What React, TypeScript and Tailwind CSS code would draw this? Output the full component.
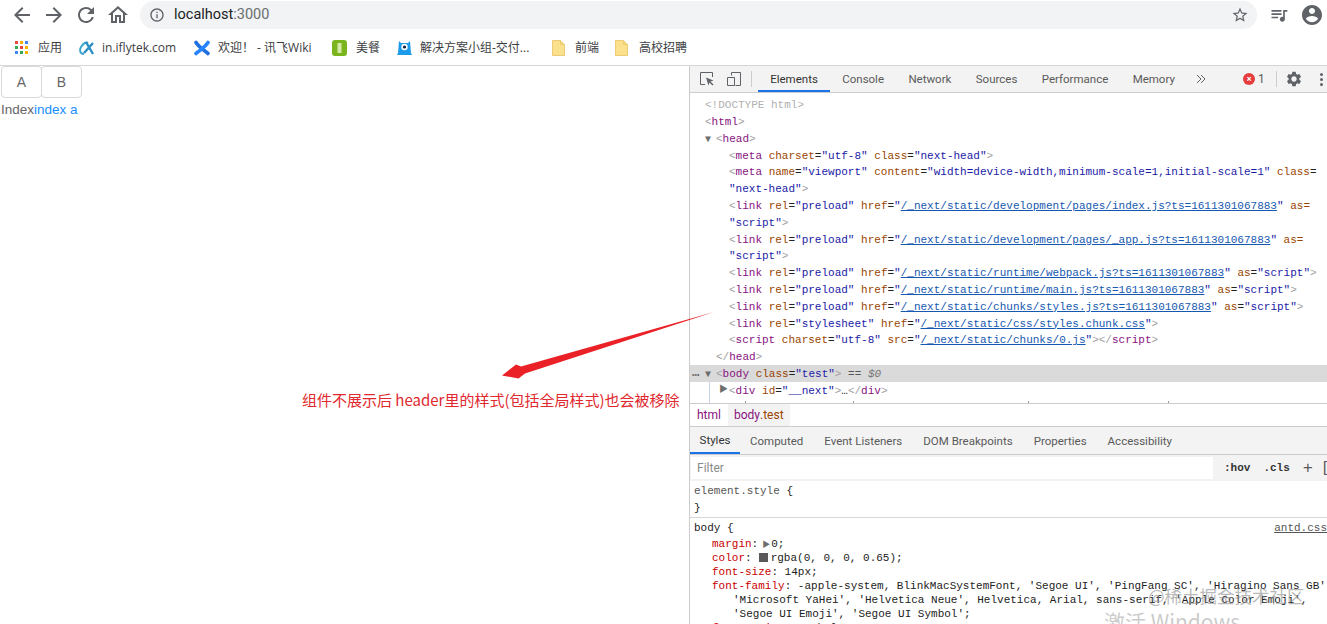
import type { ReactNode } from "react";

const UI_FONT = "font-['Roboto','Noto_Sans_CJK_SC',sans-serif]";
const BOOKMARK_FONT = "font-['Open_Sans','Noto_Sans_CJK_SC',sans-serif]";
const MONO_FONT = "font-['Liberation_Mono','Noto_Sans_CJK_SC',monospace]";

function MaterialIcon({ d, className }: { d: string; className: string }) {
  return (
    <svg viewBox="0 0 24 24" fill="currentColor" className={className}>
      <path d={d} />
    </svg>
  );
}

const ICONS = {
  back: "M20 11H7.83l5.59-5.59L12 4l-8 8 8 8 1.41-1.41L7.83 13H20v-2z",
  forward: "M12 4l-1.41 1.41L16.17 11H4v2h12.17l-5.58 5.59L12 20l8-8z",
  reload:
    "M17.65 6.35A7.958 7.958 0 0012 4c-4.42 0-7.99 3.58-7.99 8s3.57 8 7.99 8c3.73 0 6.84-2.55 7.73-6h-2.08A5.99 5.99 0 0112 18c-3.31 0-6-2.69-6-6s2.69-6 6-6c1.66 0 3.14.69 4.22 1.78L13 11h7V4l-2.35 2.35z",
  home: "M12 5.69l5 4.5V18h-2v-6H9v6H7v-7.81l5-4.5M12 3L2 12h3v8h6v-6h2v6h6v-8h3L12 3z",
  info: "M11 7h2v2h-2zm0 4h2v6h-2zm1-9C6.48 2 2 6.48 2 12s4.48 10 10 10 10-4.48 10-10S17.52 2 12 2zm0 18c-4.41 0-8-3.59-8-8s3.59-8 8-8 8 3.59 8 8-3.59 8-8 8z",
  star: "M22 9.24l-7.19-.62L12 2 9.19 8.63 2 9.24l5.46 4.73L5.82 21 12 17.27 18.18 21l-1.63-7.03L22 9.24zM12 15.4l-3.76 2.27 1-4.28-3.32-2.88 4.38-.38L12 6.1l1.71 4.04 4.38.38-3.32 2.88 1 4.28L12 15.4z",
  queue:
    "M15 6H3v2h12V6zm0 4H3v2h12v-2zM3 16h8v-2H3v2zM17 6v8.18c-.31-.11-.65-.18-1-.18-1.66 0-3 1.34-3 3s1.34 3 3 3 3-1.34 3-3V8h3V6h-5z",
  account:
    "M12 2C6.48 2 2 6.48 2 12s4.48 10 10 10 10-4.48 10-10S17.52 2 12 2zm0 3c1.66 0 3 1.34 3 3s-1.34 3-3 3-3-1.34-3-3 1.34-3 3-3zm0 14.2c-2.5 0-4.71-1.28-6-3.22.03-1.99 4-3.08 6-3.08 1.99 0 5.97 1.09 6 3.08-1.29 1.94-3.5 3.22-6 3.22z",
  gear: "M19.14 12.94c.04-.3.06-.61.06-.94 0-.32-.02-.64-.07-.94l2.03-1.58a.49.49 0 00.12-.61l-1.92-3.32a.488.488 0 00-.59-.22l-2.39.96c-.5-.38-1.03-.7-1.62-.94l-.36-2.54a.484.484 0 00-.48-.41h-3.84c-.24 0-.43.17-.47.41l-.36 2.54c-.59.24-1.13.57-1.62.94l-2.39-.96c-.22-.08-.47 0-.59.22L2.74 8.87c-.12.21-.08.47.12.61l2.03 1.58c-.05.3-.09.63-.09.94s.02.64.07.94l-2.03 1.58a.49.49 0 00-.12.61l1.92 3.32c.12.22.37.29.59.22l2.39-.96c.5.38 1.03.7 1.62.94l.36 2.54c.05.24.24.41.48.41h3.84c.24 0 .44-.17.47-.41l.36-2.54c.59-.24 1.13-.56 1.62-.94l2.39.96c.22.08.47 0 .59-.22l1.92-3.32c.12-.22.07-.47-.12-.61l-2.01-1.58zM12 15.6c-1.98 0-3.6-1.62-3.6-3.6s1.62-3.6 3.6-3.6 3.6 1.62 3.6 3.6-1.62 3.6-3.6 3.6z",
};

function FolderIcon() {
  return (
    <svg viewBox="0 0 13 16" className="h-[16px] w-[13px]">
      <path d="M.5.5h8l4 4v11H.5z" fill="#fbe08e" stroke="#eccb72" />
      <path d="M8.5.5v4h4" fill="#f6d779" stroke="#eccb72" />
    </svg>
  );
}

function Toolbar() {
  return (
    <div className="flex h-[30px] items-center bg-white text-[#5f6368]">
      <div className="flex w-[140px] items-center pl-[10px]">
        <MaterialIcon d={ICONS.back} className="mr-[8px] h-[24px] w-[24px]" />
        <MaterialIcon d={ICONS.forward} className="mr-[8px] h-[24px] w-[24px]" />
        <MaterialIcon d={ICONS.reload} className="mr-[8px] h-[24px] w-[24px]" />
        <MaterialIcon d={ICONS.home} className="h-[24px] w-[24px]" />
      </div>
      <div className="flex h-[28px] w-[1117px] items-center rounded-full bg-[#f1f3f4] pl-[9px] pr-[8px]">
        <MaterialIcon d={ICONS.info} className="h-[16px] w-[16px]" />
        <span className={`ml-[9px] text-[14.500px] text-[#202124] ${UI_FONT}`}>
          localhost<span className="text-[#6a6d70]">:3000</span>
        </span>
        <MaterialIcon d={ICONS.star} className="ml-auto h-[18px] w-[18px]" />
      </div>
      <MaterialIcon d={ICONS.queue} className="ml-[12px] h-[20px] w-[20px]" />
      <MaterialIcon d={ICONS.account} className="ml-[11px] h-[24px] w-[24px]" />
    </div>
  );
}

function AppsIcon() {
  const colors = ["#e8453c", "#f4b400", "#4285f4", "#34a853", "#e8453c", "#f4b400", "#4285f4", "#34a853", "#f4b400"];
  return (
    <div className="grid h-[13px] w-[13px] grid-cols-3 gap-[1.5px]">
      {colors.map((c, i) => (
        <svg key={i} viewBox="0 0 4 4" className="h-[3.3px] w-[3.3px]">
          <rect width="4" height="4" fill={c} />
        </svg>
      ))}
    </div>
  );
}

function Bookmark({ width, gap, icon, label }: { width: string; gap: string; icon: ReactNode; label: string }) {
  return (
    <div className={`flex shrink-0 items-center ${width} ${gap}`}>
      {icon}
      <span className="whitespace-pre text-[12px] text-[#3c4043]">{label}</span>
    </div>
  );
}

function Bookmarks() {
  return (
    <div className={`flex h-[36px] items-center border-b border-[#d6d6d6] bg-white pl-[15px] ${BOOKMARK_FONT}`}>
      <Bookmark width="w-[63px]" gap="gap-[10px]" icon={<AppsIcon />} label="应用" />
      <Bookmark
        width="w-[116px]"
        gap="gap-[7px]"
        label="in.iflytek.com"
        icon={
          <svg viewBox="0 0 17 16" className="h-[16px] w-[17px]">
            <path d="M6 14C2 14 1 10 3 7s5-5 7-4" fill="none" stroke="#3aa6cf" strokeWidth="2" />
            <path d="M8 2l7 12M15 3L6 13" fill="none" stroke="#2a8fc4" strokeWidth="2.4" />
          </svg>
        }
      />
      <Bookmark
        width="w-[138px]"
        gap="gap-[8px]"
        label="欢迎！ - 讯飞Wiki"
        icon={
          <svg viewBox="0 0 16 16" className="h-[16px] w-[16px]">
            <path d="M2 2.500C5 7 9 9.500 14 13.500" fill="none" stroke="#1f6fe0" strokeWidth="3.600" strokeLinecap="round" />
            <path d="M14 2.500C11 7 7 9.500 2 13.500" fill="none" stroke="#2684ff" strokeWidth="3.600" strokeLinecap="round" />
          </svg>
        }
      />
      <Bookmark
        width="w-[65px]"
        gap="gap-[9px]"
        label="美餐"
        icon={
          <svg viewBox="0 0 15 16" className="h-[16px] w-[15px]">
            <rect width="15" height="16" rx="3" fill="#7ab51d" />
            <rect x="5.500" y="3" width="4" height="10" fill="#d5e9a8" />
          </svg>
        }
      />
      <Bookmark
        width="w-[155px]"
        gap="gap-[8px]"
        label="解决方案小组-交付..."
        icon={
          <svg viewBox="0 0 15 16" className="h-[16px] w-[15px]">
            <path d="M2 1l2 2h7l2-2 1 12 1 2H0l1-2z" fill="#1e9be8" />
            <circle cx="7.500" cy="7" r="3.200" fill="#fff" />
            <circle cx="7.500" cy="7" r="1.600" fill="#123" />
          </svg>
        }
      />
      <Bookmark width="w-[63px]" gap="gap-[10px]" icon={<FolderIcon />} label="前端" />
      <Bookmark width="w-[80px]" gap="gap-[11px]" icon={<FolderIcon />} label="高校招聘" />
    </div>
  );
}

function PagePane() {
  return (
    <div className="w-[689px] shrink-0 bg-white font-['Liberation_Sans',sans-serif]">
      <div className="flex pl-[1px]">
        <div className="flex h-[32px] w-[41px] items-center justify-center rounded-[4px] border border-[#d9d9d9] text-[14px] text-[#666]">
          A
        </div>
        <div className="-ml-px flex h-[32px] w-[41px] items-center justify-center rounded-[4px] border border-[#d9d9d9] text-[14px] text-[#666]">
          B
        </div>
      </div>
      <div className="h-[22px] pl-px pt-px text-[13.500px] leading-[22px] text-[#666]">
        Index<span className="text-[#1890ff]">index a</span>
      </div>
    </div>
  );
}

const T = ({ children }: { children: ReactNode }) => <span className="text-[#881280]">{children}</span>;
const B = ({ children }: { children: ReactNode }) => <span className="text-[#a0a0a0]">{children}</span>;
const A = ({ children }: { children: ReactNode }) => <span className="text-[#994500]">{children}</span>;
const V = ({ children }: { children: ReactNode }) => <span className="text-[#1a1aa6]">{children}</span>;
const L = ({ children }: { children: ReactNode }) => <span className="text-[#1558b0] underline">{children}</span>;

function Row({ pad, children, selected }: { pad: string; children: ReactNode; selected?: boolean }) {
  return (
    <div className={`flex h-[16.800px] items-center whitespace-pre pt-[2px] ${pad} ${selected ? "bg-[#dadada]" : ""}`}>
      {children}
    </div>
  );
}

function LinkRow({ href, rest }: { href: string; rest: ReactNode }) {
  return (
    <Row pad="pl-[39px]">
      <span>
        <B>&lt;</B>
        <T>link</T> <A>rel</A>=<V>"preload"</V> <A>href</A>=<V>"</V>
        <L>{href}</L>
        <V>"</V> {rest}
      </span>
    </Row>
  );
}

const AsScript = () => (
  <>
    <A>as</A>=<V>"script"</V>
    <B>&gt;</B>
  </>
);

function ElementsTree() {
  return (
    <div className={`relative h-[310px] overflow-hidden bg-white pt-[3px] text-[11px] text-[#222] ${MONO_FONT}`}>
      <Row pad="pl-[15px]">
        <span className="text-[#b0b0b0]">&lt;!DOCTYPE html&gt;</span>
      </Row>
      <Row pad="pl-[15px]">
        <span>
          <B>&lt;</B>
          <T>html</T>
          <B>&gt;</B>
        </span>
      </Row>
      <Row pad="pl-[15px]">
        <span className="w-[11px] text-[10px] text-[#6e6e6e]">▼</span>
        <span>
          <B>&lt;</B>
          <T>head</T>
          <B>&gt;</B>
        </span>
      </Row>
      <Row pad="pl-[39px]">
        <span>
          <B>&lt;</B>
          <T>meta</T> <A>charset</A>=<V>"utf-8"</V> <A>class</A>=<V>"next-head"</V>
          <B>&gt;</B>
        </span>
      </Row>
      <Row pad="pl-[39px]">
        <span>
          <B>&lt;</B>
          <T>meta</T> <A>name</A>=<V>"viewport"</V> <A>content</A>=<V>"width=device-width,minimum-scale=1,initial-scale=1"</V> <A>class</A>=
        </span>
      </Row>
      <Row pad="pl-[39px]">
        <span>
          <V>"next-head"</V>
          <B>&gt;</B>
        </span>
      </Row>
      <LinkRow href="/_next/static/development/pages/index.js?ts=1611301067883" rest={<A>as=</A>} />
      <Row pad="pl-[39px]">
        <span>
          <V>"script"</V>
          <B>&gt;</B>
        </span>
      </Row>
      <LinkRow href="/_next/static/development/pages/_app.js?ts=1611301067883" rest={<A>as=</A>} />
      <Row pad="pl-[39px]">
        <span>
          <V>"script"</V>
          <B>&gt;</B>
        </span>
      </Row>
      <LinkRow href="/_next/static/runtime/webpack.js?ts=1611301067883" rest={<AsScript />} />
      <LinkRow href="/_next/static/runtime/main.js?ts=1611301067883" rest={<AsScript />} />
      <LinkRow href="/_next/static/chunks/styles.js?ts=1611301067883" rest={<AsScript />} />
      <Row pad="pl-[39px]">
        <span>
          <B>&lt;</B>
          <T>link</T> <A>rel</A>=<V>"stylesheet"</V> <A>href</A>=<V>"</V>
          <L>/_next/static/css/styles.chunk.css</L>
          <V>"</V>
          <B>&gt;</B>
        </span>
      </Row>
      <Row pad="pl-[39px]">
        <span>
          <B>&lt;</B>
          <T>script</T> <A>charset</A>=<V>"utf-8"</V> <A>src</A>=<V>"</V>
          <L>/_next/static/chunks/0.js</L>
          <V>"</V>
          <B>&gt;&lt;/</B>
          <T>script</T>
          <B>&gt;</B>
        </span>
      </Row>
      <Row pad="pl-[26px]">
        <span>
          <B>&lt;/</B>
          <T>head</T>
          <B>&gt;</B>
        </span>
      </Row>
      <Row pad="pl-[2px]" selected>
        <span className="w-[13px] font-['Liberation_Sans',sans-serif] text-[7px] leading-none text-[#666]">•••</span>
        <span className="w-[11px] text-[10px] text-[#6e6e6e]">▼</span>
        <span>
          <B>&lt;</B>
          <T>body</T> <A>class</A>=<V>"test"</V>
          <B>&gt;</B> <span className="text-[#555]">==</span> <span className="italic text-[#777]">$0</span>
        </span>
      </Row>
      <Row pad="pl-[29px]">
        <span className="w-[10px] text-[9px] text-[#6e6e6e]">▶</span>
        <span>
          <B>&lt;</B>
          <T>div</T> <A>id</A>=<V>"__next"</V>
          <B>&gt;</B>…<B>&lt;/</B>
          <T>div</T>
          <B>&gt;</B>
        </span>
      </Row>
      {/* blue guide line of the selected node */}
      <div className="absolute bottom-0 left-[19px] h-[21px] w-px bg-[#c5d4ea]" />
      {/* tops of the next row, clipped by the pane edge */}
      <div className="absolute bottom-0 left-[55px] h-[2px] w-px bg-[#9a9a9a]" />
      <div className="absolute bottom-0 left-[163px] h-[2px] w-px bg-[#9a9a9a]" />
      <div className="absolute bottom-0 left-[338px] h-[2px] w-px bg-[#9a9a9a]" />
      <div className="absolute bottom-0 left-[478px] h-[2px] w-px bg-[#9a9a9a]" />
    </div>
  );
}

function DevTabs() {
  return (
    <div className={`flex h-[27px] items-center border-b border-[#cccccc] bg-[#f3f3f3] text-[11.500px] text-[#5a5a5a] ${UI_FONT}`}>
      <svg viewBox="0 0 16 16" className="ml-[9px] h-[16px] w-[16px] text-[#5f6368]">
        <path d="M6 13.500H1.500v-12h12V6" fill="none" stroke="currentColor" />
        <path d="M7 6.500l7.500 3-3 1 3 3-1 1-3-3-1 3z" fill="currentColor" />
      </svg>
      <svg viewBox="0 0 16 16" className="ml-[11px] h-[16px] w-[16px] text-[#5f6368]">
        <path d="M5.500 4.500v-3h9v13h-5M1.500 6.500h7v8h-7z" fill="none" stroke="currentColor" />
      </svg>
      <div className="ml-[9px] h-[16px] w-px bg-[#ccc]" />
      <div className="ml-[6px] flex h-full items-center">
        <div className="flex h-full items-center border-b-2 border-[#1a73e8] px-[12.200px] pt-[3px] text-[#333]">Elements</div>
        <div className="px-[12.200px] pt-[2px]">Console</div>
        <div className="px-[12.200px] pt-[2px]">Network</div>
        <div className="px-[12.200px] pt-[2px]">Sources</div>
        <div className="px-[12.200px] pt-[2px]">Performance</div>
        <div className="px-[12.200px] pt-[2px]">Memory</div>
      </div>
      <svg viewBox="0 0 10 10" className="ml-[9px] h-[10px] w-[10px] text-[#5f6368]">
        <path d="M1 1l4 4-4 4M5 1l4 4-4 4" fill="none" stroke="currentColor" />
      </svg>
      <div className="ml-[37px] flex h-[12px] w-[12px] shrink-0 items-center justify-center rounded-full bg-[#e53d3d] text-[9px] font-bold leading-none text-white">
        ×
      </div>
      <span className="ml-[3px] text-[12px] text-[#5a5a5a]">1</span>
      <div className="ml-[11px] h-[16px] w-px shrink-0 bg-[#ccc]" />
      <MaterialIcon d={ICONS.gear} className="ml-[8px] h-[18px] w-[18px] shrink-0 text-[#5f6368]" />
      <div className="ml-[17px] flex shrink-0 flex-col gap-[2px]">
        <div className="h-[3px] w-[3px] rounded-full bg-[#5f6368]" />
        <div className="h-[3px] w-[3px] rounded-full bg-[#5f6368]" />
        <div className="h-[3px] w-[3px] rounded-full bg-[#5f6368]" />
      </div>
    </div>
  );
}

function StyleLine({ children, indent = "pl-[22px]" }: { children: ReactNode; indent?: string }) {
  return <div className={`h-[14px] whitespace-pre leading-[14px] ${indent}`}>{children}</div>;
}

const Prop = ({ children }: { children: ReactNode }) => <span className="text-[#c80000]">{children}</span>;

function StylesPane() {
  return (
    <div className="flex-1 overflow-hidden bg-white">
      <div className={`flex h-[24px] items-center border-y border-[#cccccc] pl-[7px] text-[12px] ${UI_FONT}`}>
        <span className="text-[#881280]">html</span>
        <span className="ml-[7px] flex h-full items-center bg-[#f3f3f3] px-[6px] text-[#881280]">
          body<span className="text-[#994500]">.test</span>
        </span>
      </div>
      <div className={`flex h-[28px] items-stretch border-b border-[#cccccc] bg-[#f3f3f3] text-[11.500px] text-[#5a5a5a] ${UI_FONT}`}>
        <div className="flex w-[50px] items-center justify-center border-b-2 border-[#1a73e8] pt-[2px] text-[#333]">Styles</div>
        <div className="flex items-center gap-[21px] pl-[10px] pt-[2px]">
          <span>Computed</span>
          <span>Event Listeners</span>
          <span>DOM Breakpoints</span>
          <span>Properties</span>
          <span>Accessibility</span>
        </div>
      </div>
      <div className={`flex h-[26px] items-center bg-[#f3f3f3] text-[11px] text-[#333] ${MONO_FONT}`}>
        <div className={`ml-px flex h-[22px] w-[522px] shrink-0 items-center bg-white pl-[6px] text-[12px] text-[#8a8a8a] ${UI_FONT}`}>
          Filter
        </div>
        <span className="ml-[11px] shrink-0 font-bold">:hov</span>
        <span className="ml-[13px] shrink-0 font-bold">.cls</span>
        <span className="ml-[13px] shrink-0 text-[17px] leading-none text-[#5a5a5a]">+</span>
        <span className="ml-[8px] shrink-0 text-[15px] leading-none text-[#5a5a5a]">[</span>
      </div>
      <div className={`text-[11px] text-[#222] ${MONO_FONT}`}>
        <div className="h-[37px] border-b border-[#d6d6d6] pl-[4px] pt-[2px]">
          <div className="h-[16.500px] leading-[16.500px]">
            <span className="text-[#555]">element.style</span> {"{"}
          </div>
          <div className="h-[16.500px] leading-[16.500px]">{"}"}</div>
        </div>
        <div className="flex h-[19px] items-center justify-between pl-[4px] pt-[2px]">
          <span>body {"{"}</span>
          <span className="text-[#555] underline">antd.css</span>
        </div>
        <StyleLine>
          <Prop>margin</Prop>:<span className="ml-[4px] inline-block w-[9px] text-[8px] text-[#6e6e6e]">▶</span>0;
        </StyleLine>
        <StyleLine>
          <Prop>color</Prop>:<span className="ml-[7px] mr-[3px] inline-block h-[9px] w-[9px] translate-y-px bg-[#595959]" />rgba(0, 0, 0, 0.65);
        </StyleLine>
        <StyleLine>
          <Prop>font-size</Prop>: 14px;
        </StyleLine>
        <StyleLine>
          <Prop>font-family</Prop>: -apple-system, BlinkMacSystemFont, 'Segoe UI', 'PingFang SC', 'Hiragino Sans GB',
        </StyleLine>
        <StyleLine indent="pl-[43px]">'Microsoft YaHei', 'Helvetica Neue', Helvetica, Arial, sans-serif, 'Apple Color Emoji',</StyleLine>
        <StyleLine indent="pl-[43px]">'Segoe UI Emoji', 'Segoe UI Symbol';</StyleLine>
        <StyleLine>
          <Prop>font-variant</Prop>: tabular-nums;
        </StyleLine>
      </div>
    </div>
  );
}

function DevTools() {
  return (
    <div className="flex w-[638px] shrink-0 flex-col overflow-hidden border-l border-[#cccccc]">
      <DevTabs />
      <ElementsTree />
      <StylesPane />
    </div>
  );
}

export default function App() {
  return (
    <div className="relative flex h-[624px] w-[1327px] flex-col overflow-hidden bg-white">
      <Toolbar />
      <Bookmarks />
      <div className="flex min-h-0 flex-1">
        <PagePane />
        <DevTools />
      </div>

      {/* screenshot annotation drawn on top */}
      <svg viewBox="0 0 1327 624" className="pointer-events-none absolute inset-0 h-[624px] w-[1327px]">
        <path d="M714 312L521 366.500 516 364.500 502 375.500 518.500 378.500 525 373.500z" fill="#ea2227" />
      </svg>
      <div className="absolute left-[302px] top-[390px] whitespace-pre font-['Noto_Sans_CJK_SC',sans-serif] text-[15px] leading-[20px] text-[#e0282e]">
        组件不展示后 header里的样式(包括全局样式)也会被移除
      </div>
      <div className="absolute left-[1148px] top-[586px] whitespace-pre font-['Noto_Sans_CJK_SC',sans-serif] text-[17.500px] leading-[20px] text-[#8a8a8a]/60">
        @稀土掘金技术社区
      </div>
      <div className="absolute left-[1104px] top-[607px] whitespace-pre font-['Noto_Sans_CJK_SC',sans-serif] text-[21px] leading-[28px] text-[#b4b4b4]/70">
        激活 Windows
      </div>
    </div>
  );
}
